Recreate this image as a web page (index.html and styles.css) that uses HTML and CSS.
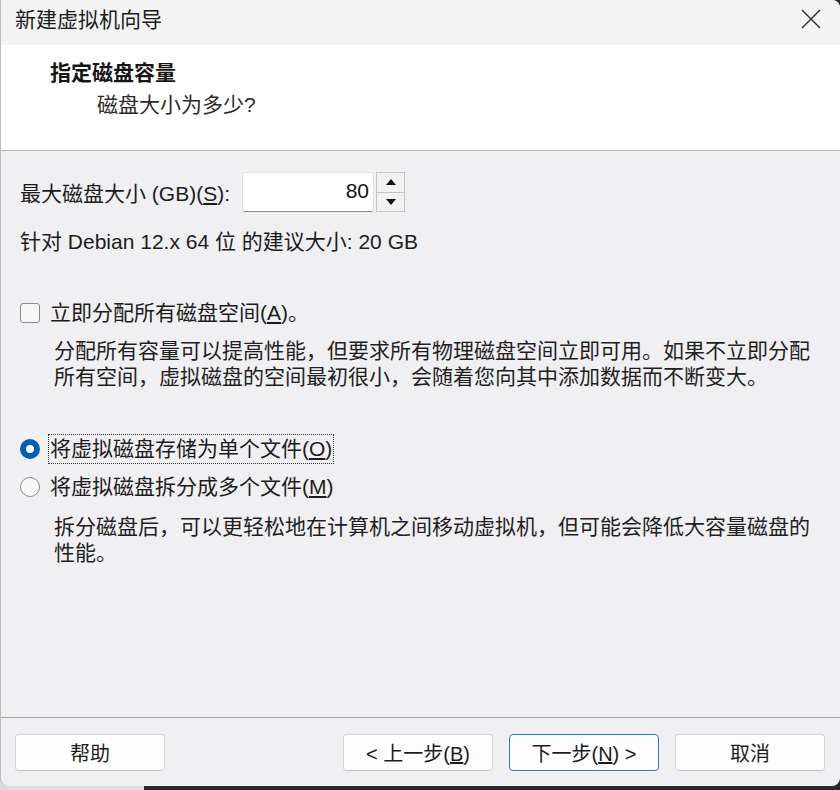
FILE: index.html
```html
<!DOCTYPE html>
<html lang="zh-CN">
<head>
<meta charset="utf-8">
<title>新建虚拟机向导</title>
<link rel="stylesheet" href="styles.css">
</head>
<body>
<div class="window">
  <div class="titlebar">
    <span class="title">新建虚拟机向导</span>
    <svg class="close" width="20" height="20" viewBox="0 0 20 20"><path d="M1 1 L19 19 M19 1 L1 19" stroke="#2b2b2b" stroke-width="1.4" fill="none"/></svg>
  </div>
  <div class="header">
    <div class="h1">指定磁盘容量</div>
    <div class="h2">磁盘大小为多少?</div>
  </div>
  <div class="content">
    <div class="size-row">
      <span class="size-label">最大磁盘大小 (GB)(<u>S</u>):</span>
      <div class="spin">
        <div class="spin-input">80</div>
        <div class="spin-btns">
          <div class="spin-btn"><svg width="10" height="6" viewBox="0 0 10 6"><path d="M5 0 L10 6 L0 6 Z" fill="#111"/></svg></div>
          <div class="spin-btn"><svg width="10" height="6" viewBox="0 0 10 6"><path d="M0 0 L10 0 L5 6 Z" fill="#111"/></svg></div>
        </div>
      </div>
    </div>
    <div class="recommend">针对 Debian 12.x 64 位 的建议大小: 20 GB</div>
    <div class="check-row">
      <span class="checkbox"></span>
      <span class="opt-label">立即分配所有磁盘空间(<u>A</u>)。</span>
    </div>
    <p class="desc desc-a">分配所有容量可以提高性能，但要求所有物理磁盘空间立即可用。如果不立即分配<br>所有空间，虚拟磁盘的空间最初很小，会随着您向其中添加数据而不断变大。</p>
    <div class="radio-row radio-first">
      <span class="radio checked"></span>
      <span class="opt-label focus">将虚拟磁盘存储为单个文件(<u>O</u>)</span>
    </div>
    <div class="radio-row radio-second">
      <span class="radio"></span>
      <span class="opt-label">将虚拟磁盘拆分成多个文件(<u>M</u>)</span>
    </div>
    <p class="desc desc-b">拆分磁盘后，可以更轻松地在计算机之间移动虚拟机，但可能会降低大容量磁盘的<br>性能。</p>
  </div>
  <div class="footer">
    <button class="btn btn-help">帮助</button>
    <button class="btn">&lt; 上一步(<u>B</u>)</button>
    <button class="btn btn-default">下一步(<u>N</u>) &gt;</button>
    <button class="btn">取消</button>
  </div>
</div>
</body>
</html>
```
FILE: styles.css
```css
html, body {
  margin: 0;
  padding: 0;
}
body {
  width: 840px;
  height: 790px;
  background: linear-gradient(to right, #dcdcdc 144px, #2a2a2a 144px);
  font-family: "Liberation Sans", "Noto Sans CJK SC", sans-serif;
  font-size: 21px;
  color: #1c1c1c;
  overflow: hidden;
}
.window {
  box-sizing: border-box;
  width: 840px;
  height: 786px;
  background: #f0eff2;
  border-left: 1px solid #bdbdbd;
  border-radius: 0 8px 8px 8px;
  display: flex;
  flex-direction: column;
  overflow: hidden;
}
.titlebar {
  height: 45px;
  flex: none;
  background: #f3f3f3;
  display: flex;
  align-items: flex-start;
  justify-content: space-between;
}
.title {
  line-height: 40px;
  padding-left: 14px;
  color: #1a1a1a;
}
.close {
  margin-top: 9px;
  margin-right: 19px;
}
.header {
  height: 106px;
  flex: none;
  box-sizing: border-box;
  background: #ffffff;
  border-bottom: 1px solid #b9b9b9;
  padding-top: 14px;
}
.h1 {
  font-weight: bold;
  line-height: 28px;
  padding-left: 49px;
  color: #151515;
}
.h2 {
  line-height: 28px;
  margin-top: 4px;
  padding-left: 96px;
  color: #2a2a2a;
}
.content {
  flex: 1;
  padding-left: 19px;
}
.size-row {
  margin-top: 21px;
  display: flex;
  align-items: center;
  height: 40px;
}
.size-label {
  width: 222px;
}
.spin {
  display: flex;
  height: 40px;
}
.spin-input {
  box-sizing: border-box;
  width: 132px;
  height: 40px;
  background: #ffffff;
  border: 1px solid #e3e3e3;
  border-bottom: 1px solid #8e8e8e;
  border-radius: 3px;
  text-align: right;
  padding-right: 4px;
  line-height: 36px;
  color: #111;
}
.spin-btns {
  display: flex;
  flex-direction: column;
  margin-left: 2px;
  width: 29px;
  border: 1px solid #c4c4c4;
  box-sizing: border-box;
  height: 40px;
}
.spin-btn {
  flex: 1;
  display: flex;
  align-items: center;
  justify-content: center;
  background: #f2f2f2;
}
.spin-btn + .spin-btn {
  border-top: 1px solid #c4c4c4;
}
.recommend {
  margin-top: 16px;
  line-height: 28px;
}
.check-row {
  margin-top: 43px;
  display: flex;
  align-items: center;
  height: 28px;
}
.checkbox {
  box-sizing: border-box;
  width: 20px;
  height: 20px;
  border: 1px solid #8a8a8a;
  border-radius: 3px;
  background: #f7f7f7;
  margin-right: 10px;
}
.desc {
  margin: 0;
  padding-left: 34px;
  line-height: 26px;
  white-space: nowrap;
  color: #1f1f1f;
}
.desc-a {
  margin-top: 11px;
}
.radio-row {
  display: flex;
  align-items: center;
}
.radio-first {
  margin-top: 44px;
  height: 30px;
}
.radio-second {
  margin-top: 9px;
  height: 28px;
}
.radio {
  box-sizing: border-box;
  width: 20px;
  height: 20px;
  border-radius: 50%;
  border: 1px solid #8a8a8a;
  background: #f9f9f9;
  margin-right: 10px;
}
.radio.checked {
  border: 6px solid #005fb8;
  background: #ffffff;
}
.opt-label {
  line-height: 28px;
}
.focus {
  border: 1px dotted #333;
  margin-left: -2px;
  padding: 0 1px;
}
.desc-b {
  margin-top: 13px;
}
.footer {
  height: 69px;
  flex: none;
  box-sizing: border-box;
  border-top: 1px solid #a7a7a7;
  padding: 16px 15px 0 14px;
  display: flex;
  gap: 16px;
}
.btn {
  box-sizing: border-box;
  width: 150px;
  height: 37px;
  background: #fdfdfd;
  border: 1px solid #d6d6d6;
  border-bottom-color: #c4c4c4;
  border-radius: 4px;
  font-family: "Liberation Sans", "Noto Sans CJK SC", sans-serif;
  font-size: 20px;
  color: #1c1c1c;
  padding: 0;
}
.btn-help {
  margin-right: auto;
}
.btn-default {
  border: 1px solid #2a7bd0;
}
```
